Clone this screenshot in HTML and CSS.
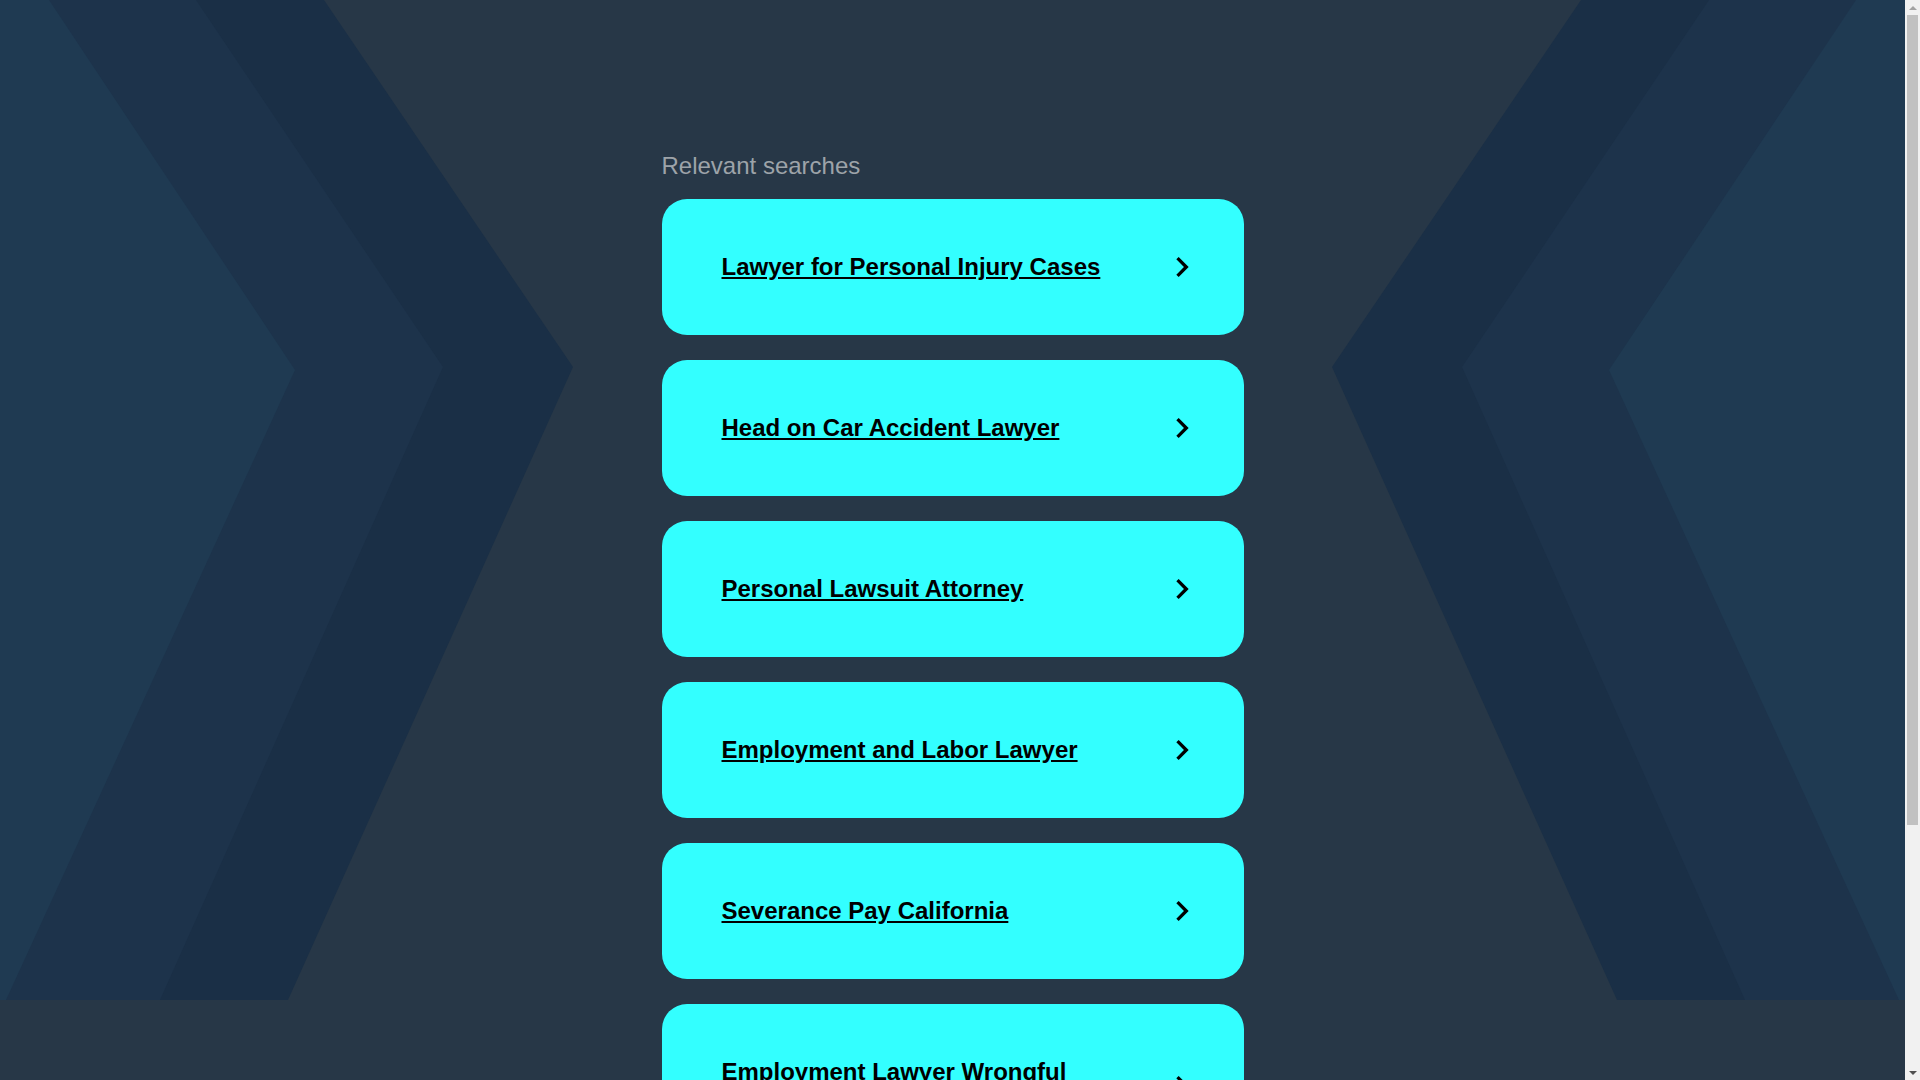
FILE: index.html
```html
<!DOCTYPE html>
<html lang="en">
<head>
<meta charset="utf-8">
<title>Relevant searches</title>
<link rel="stylesheet" href="styles.css">
</head>
<body>
<div class="page">
  <svg class="bg" viewBox="0 0 1905 1000" preserveAspectRatio="none" aria-hidden="true">
    <polygon class="c-outer" points="0,0 324,0 573,367 288,1000 0,1000"/>
    <polygon class="c-mid" points="0,0 196,0 443,367 160,1000 0,1000"/>
    <polygon class="c-inner" points="0,0 49,0 295,370 6,1000 0,1000"/>
    <polygon class="c-outer" points="1905,0 1581,0 1332,367 1617,1000 1905,1000"/>
    <polygon class="c-mid" points="1905,0 1709,0 1462,367 1745,1000 1905,1000"/>
    <polygon class="c-inner" points="1905,0 1856,0 1609,370 1899,1000 1905,1000"/>
  </svg>
  <main class="content">
    <h2 class="heading">Relevant searches</h2>
    <ul class="list">
      <li class="card"><a class="card-link" href="#">Lawyer for Personal Injury Cases</a><svg class="chev" viewBox="0 0 24 24"><path d="M10 6L8.59 7.41 13.17 12l-4.58 4.59L10 18l6-6z"/></svg></li>
      <li class="card"><a class="card-link" href="#">Head on Car Accident Lawyer</a><svg class="chev" viewBox="0 0 24 24"><path d="M10 6L8.59 7.41 13.17 12l-4.58 4.59L10 18l6-6z"/></svg></li>
      <li class="card"><a class="card-link" href="#">Personal Lawsuit Attorney</a><svg class="chev" viewBox="0 0 24 24"><path d="M10 6L8.59 7.41 13.17 12l-4.58 4.59L10 18l6-6z"/></svg></li>
      <li class="card"><a class="card-link" href="#">Employment and Labor Lawyer</a><svg class="chev" viewBox="0 0 24 24"><path d="M10 6L8.59 7.41 13.17 12l-4.58 4.59L10 18l6-6z"/></svg></li>
      <li class="card"><a class="card-link" href="#">Severance Pay California</a><svg class="chev" viewBox="0 0 24 24"><path d="M10 6L8.59 7.41 13.17 12l-4.58 4.59L10 18l6-6z"/></svg></li>
      <li class="card"><a class="card-link" href="#">Employment Lawyer Wrongful Termination</a><svg class="chev" viewBox="0 0 24 24"><path d="M10 6L8.59 7.41 13.17 12l-4.58 4.59L10 18l6-6z"/></svg></li>
    </ul>
  </main>
</div>
<div class="scrollbar" aria-hidden="true">
  <div class="sb-btn"><span class="sb-arrow up"></span></div>
  <div class="sb-track">
    <div class="sb-thumb"></div>
  </div>
  <div class="sb-btn"><span class="sb-arrow down"></span></div>
</div>
</body>
</html>
```
FILE: styles.css
```css
html, body {
  margin: 0;
  padding: 0;
}
body {
  background: #273747;
  font-family: "Liberation Sans", Arial, sans-serif;
  display: flex;
  align-items: flex-start;
}
.page {
  flex: 1;
  min-width: 0;
  display: grid;
  grid-template-columns: 1fr;
}
.bg {
  grid-area: 1 / 1;
  align-self: start;
  width: 100%;
  height: 1000px;
  display: block;
}
.c-outer { fill: #1a2f46; }
.c-mid { fill: #1d334b; }
.c-inner { fill: #1f3a52; }
.content {
  grid-area: 1 / 1;
  width: 582px;
  justify-self: center;
  padding: 152px 0 232px;
}
.heading {
  margin: 0 0 19px;
  font-size: 24px;
  line-height: 28px;
  font-weight: normal;
  color: #9da3a9;
}
.list {
  list-style: none;
  margin: 0;
  padding: 0;
  display: flex;
  flex-direction: column;
  gap: 25px;
}
.card {
  background: #33ffff;
  border-radius: 25px;
  padding: 54px 42px 54px 60px;
  display: flex;
  align-items: center;
  gap: 24px;
}
.card-link {
  flex: 1;
  font-size: 24px;
  line-height: 28px;
  font-weight: bold;
  color: #000;
  text-decoration: underline;
}
.chev {
  width: 40px;
  height: 40px;
  margin: -6px 0;
  flex: none;
  fill: #000;
}
.scrollbar {
  flex: none;
  width: 15px;
  height: 100vh;
  position: sticky;
  top: 0;
  background: #f1f1f1;
  display: flex;
  flex-direction: column;
}
.sb-btn {
  height: 15px;
  flex: none;
  display: flex;
  align-items: center;
  justify-content: center;
}
.sb-arrow {
  width: 0;
  height: 0;
  border-left: 4px solid transparent;
  border-right: 4px solid transparent;
}
.sb-arrow.up {
  border-bottom: 4px solid #a3a3a3;
}
.sb-arrow.down {
  border-top: 4px solid #505050;
}
.sb-track {
  flex: 1;
  padding: 0 2px;
}
.sb-thumb {
  height: 810px;
  background: #c1c1c1;
}
```
